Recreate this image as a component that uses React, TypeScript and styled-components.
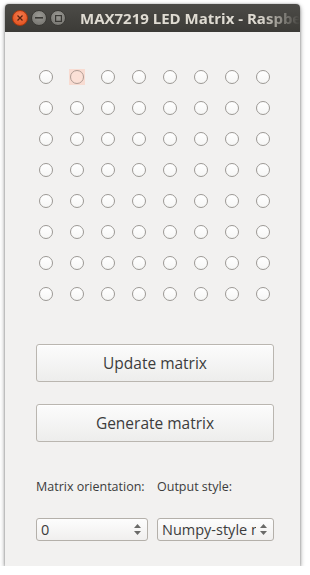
import React from 'react';
import styled, {createGlobalStyle} from 'styled-components';

const GlobalStyle = createGlobalStyle`
  html, body {
    margin: 0;
    padding: 0;
    background: #fff;
  }
  body {
    font-family: "Open Sans", "Noto Sans", sans-serif;
  }
`
const Window = styled.div`
  margin: 4px 0 0 5px;
  width: 295px;
  height: 562px;
  display: flex;
  flex-direction: column;
  background: #f2f1f0;
  box-shadow: 0 2px 5px rgba(0,0,0,.45), 0 0 2px rgba(0,0,0,.3);
  border-radius: 4px 4px 0 0;
  overflow: hidden;
`
const TitleBar = styled.header`
  height: 28px;
  display: flex;
  align-items: center;
  padding-left: 7px;
  gap: 3px;
  background: linear-gradient(#4c4b47, #3c3b37);
`
const WinButton = styled.span<{close?: boolean}>`
  width: 16px;
  height: 16px;
  border-radius: 50%;
  display: flex;
  align-items: center;
  justify-content: center;
  background: ${p => p.close
    ? 'radial-gradient(circle at 50% 35%, #f57b4f, #df4a16)'
    : 'radial-gradient(circle at 50% 35%, #9b9a95, #6f6e69)'};
  border: 1px solid ${p => p.close ? '#a8380f' : '#3a3935'};
  box-sizing: border-box;
`
const Title = styled.span`
  margin-left: 11px;
  font-size: 15px;
  font-weight: 700;
  color: #dfdbd2;
  white-space: nowrap;
  overflow: hidden;
  flex: 1;
  -webkit-mask-image: linear-gradient(90deg, #000 82%, transparent 100%);
`
const Content = styled.div`
  flex: 1;
  display: flex;
  flex-direction: column;
`
const LedGrid = styled.div`
  display: grid;
  grid-template-columns: repeat(8, 31px);
  grid-auto-rows: 31.1px;
  margin: 29px 0 0 25px;
`
const Cell = styled.div`
  display: flex;
  align-items: center;
  justify-content: center;
`
const Led = styled.span<{hover?: boolean}>`
  width: 16px;
  height: 16px;
  display: flex;
  align-items: center;
  justify-content: center;
  background: ${p => p.hover ? '#f8dcd2' : 'transparent'};
  &::after {
    content: '';
    width: 14px;
    height: 14px;
    box-sizing: border-box;
    border-radius: 50%;
    border: 1px solid ${p => p.hover ? '#b09c94' : '#9c9995'};
    background: ${p => p.hover ? '#fbe0d6' : 'linear-gradient(#fff, #f6f6f5)'};
  }
`
const Buttons = styled.div`
  display: flex;
  flex-direction: column;
  gap: 22px;
  margin: 34px 26px 0 31px;
`
const Button = styled.button`
  height: 38px;
  border: 1px solid #bab6b0;
  border-radius: 3px;
  background: linear-gradient(#fcfcfc, #ededec);
  box-shadow: inset 0 1px 0 #fff;
  font-family: inherit;
  font-size: 15.5px;
  color: #3c3c3c;
`
const Form = styled.div`
  display: grid;
  grid-template-columns: 112px 117px;
  column-gap: 9px;
  row-gap: 23px;
  margin: 37px 0 0 31px;
`
const Label = styled.span`
  font-size: 12.5px;
  color: #3c3c3c;
  line-height: 16px;
  white-space: nowrap;
`
const Combo = styled.div`
  height: 23px;
  box-sizing: border-box;
  border: 1px solid #b4b0aa;
  border-radius: 3px;
  background: linear-gradient(#fdfdfd, #f0efee);
  display: flex;
  align-items: center;
  padding: 0 5px 0 4px;
  gap: 3px;
`
const ComboText = styled.span`
  flex: 1;
  overflow: hidden;
  white-space: nowrap;
  font-size: 14.5px;
  color: #3c3c3c;
`
const Arrows = styled.span`
  display: flex;
  flex-direction: column;
  gap: 3px;
  width: 9px;
  align-items: center;
`

const Arrow = ({down}: {down?: boolean}) => (
  <svg width="7" height="4" viewBox="0 0 7 4">
    <path d={down ? 'M0 0 L7 0 L3.5 4 Z' : 'M0 4 L7 4 L3.5 0 Z'} fill="#6a6a68" />
  </svg>
)

const ComboBox = ({value}: {value: string}) => (
  <Combo>
    <ComboText>{value}</ComboText>
    <Arrows><Arrow /><Arrow down /></Arrows>
  </Combo>
)

const App: React.FC = () => {
  const leds = Array.from({length: 64}, (_, i) => i)
  return (
    <>
      <GlobalStyle />
      <Window>
        <TitleBar>
          <WinButton close>
            <svg width="6" height="6" viewBox="0 0 6 6">
              <path d="M0.5 0.5 L5.5 5.5 M5.5 0.5 L0.5 5.5" stroke="#5a2410" strokeWidth="1.3" />
            </svg>
          </WinButton>
          <WinButton>
            <svg width="8" height="2" viewBox="0 0 8 2">
              <rect width="8" height="1.6" fill="#3a3935" />
            </svg>
          </WinButton>
          <WinButton>
            <svg width="7" height="7" viewBox="0 0 7 7">
              <rect x="0.6" y="0.6" width="5.8" height="5.8" fill="none" stroke="#3a3935" strokeWidth="1.2" />
            </svg>
          </WinButton>
          <Title>MAX7219 LED Matrix - Raspbe</Title>
        </TitleBar>
        <Content>
          <LedGrid>
            {leds.map(i => (
              <Cell key={i}><Led hover={i === 1} /></Cell>
            ))}
          </LedGrid>
          <Buttons>
            <Button>Update matrix</Button>
            <Button>Generate matrix</Button>
          </Buttons>
          <Form>
            <Label>Matrix orientation:</Label>
            <Label>Output style:</Label>
            <ComboBox value="0" />
            <ComboBox value="Numpy-style matrix" />
          </Form>
        </Content>
      </Window>
    </>
  )
}

export default App;
